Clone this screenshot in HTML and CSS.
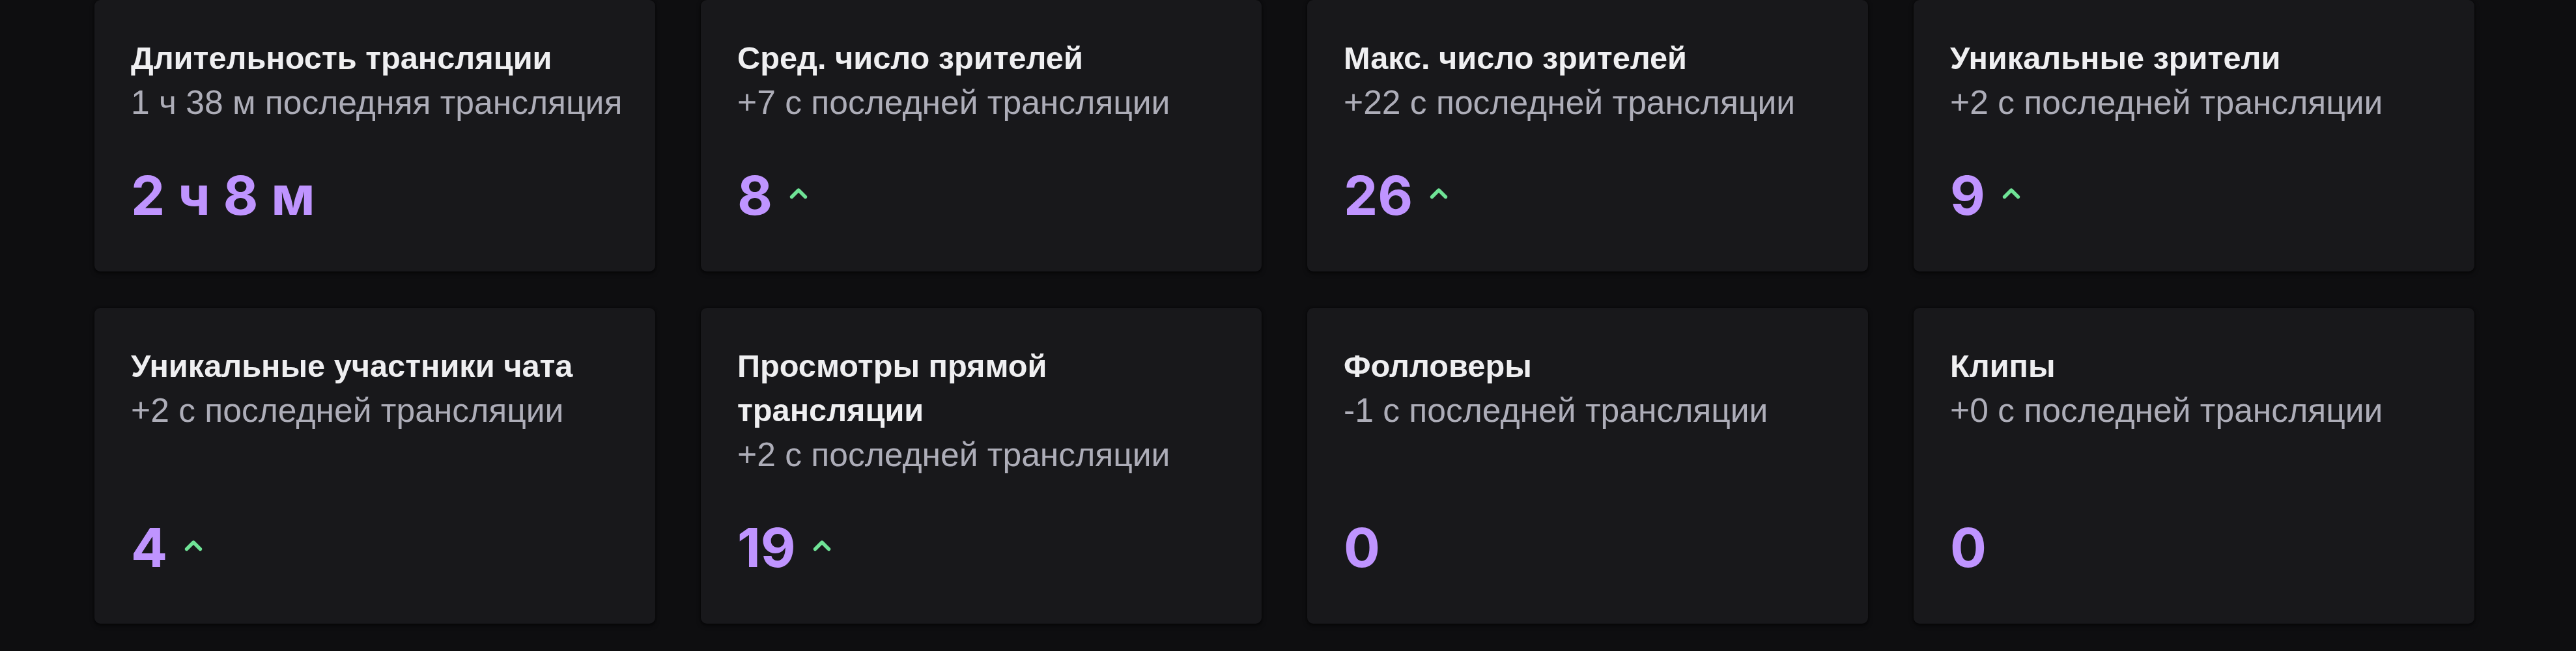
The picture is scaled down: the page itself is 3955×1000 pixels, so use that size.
FILE: index.html
```html
<!DOCTYPE html>
<html lang="ru">
<head>
<meta charset="utf-8">
<title>Статистика трансляции</title>
<link rel="stylesheet" href="styles.css">
</head>
<body>
<main class="stats">
  <section class="card">
    <h3 class="title">Длительность трансляции</h3>
    <p class="sub">1 ч 38 м последняя трансляция</p>
    <div class="value"><span class="num">2 ч 8 м</span></div>
  </section>
  <section class="card">
    <h3 class="title">Сред. число зрителей</h3>
    <p class="sub">+7 с последней трансляции</p>
    <div class="value"><span class="num">8</span><svg class="up" viewBox="0 0 20 14"><polyline points="3,11 10,4 17,11"/></svg></div>
  </section>
  <section class="card">
    <h3 class="title">Макс. число зрителей</h3>
    <p class="sub">+22 с последней трансляции</p>
    <div class="value"><span class="num">26</span><svg class="up" viewBox="0 0 20 14"><polyline points="3,11 10,4 17,11"/></svg></div>
  </section>
  <section class="card">
    <h3 class="title">Уникальные зрители</h3>
    <p class="sub">+2 с последней трансляции</p>
    <div class="value"><span class="num">9</span><svg class="up" viewBox="0 0 20 14"><polyline points="3,11 10,4 17,11"/></svg></div>
  </section>
  <section class="card">
    <h3 class="title">Уникальные участники чата</h3>
    <p class="sub">+2 с последней трансляции</p>
    <div class="value"><span class="num">4</span><svg class="up" viewBox="0 0 20 14"><polyline points="3,11 10,4 17,11"/></svg></div>
  </section>
  <section class="card">
    <h3 class="title">Просмотры прямой трансляции</h3>
    <p class="sub">+2 с последней трансляции</p>
    <div class="value"><span class="num">19</span><svg class="up" viewBox="0 0 20 14"><polyline points="3,11 10,4 17,11"/></svg></div>
  </section>
  <section class="card">
    <h3 class="title">Фолловеры</h3>
    <p class="sub">-1 с последней трансляции</p>
    <div class="value"><span class="num">0</span></div>
  </section>
  <section class="card">
    <h3 class="title">Клипы</h3>
    <p class="sub">+0 с последней трансляции</p>
    <div class="value"><span class="num">0</span></div>
  </section>
</main>
</body>
</html>
```
FILE: styles.css
```css
html, body {
  margin: 0;
  padding: 0;
  background: #0e0e10;
}

body {
  font-family: "Liberation Sans", Arial, sans-serif;
  color: #efeff1;
  height: 1000px;
  overflow: hidden;
}

.stats {
  display: grid;
  grid-template-columns: repeat(4, 1fr);
  column-gap: 70px;
  row-gap: 56px;
  padding: 0 156px 0 145px;
}

.card {
  display: flex;
  flex-direction: column;
  background: #18181b;
  border-radius: 9px;
  padding: 55px 30px 64px 56px;
  box-shadow: 0 3px 6px rgba(0, 0, 0, 0.55), 0 0 3px rgba(0, 0, 0, 0.5);
  min-width: 0;
}

.title {
  margin: 0;
  max-width: 760px;
  font-size: 48.7px;
  font-weight: 700;
  line-height: 68px;
  color: #efeff1;
}

.sub {
  margin: 0;
  font-size: 51.6px;
  font-weight: 400;
  line-height: 69px;
  color: #adadb8;
  white-space: nowrap;
}

.value {
  margin-top: auto;
  padding-top: 56px;
  display: flex;
  align-items: center;
  gap: 25px;
}

.num {
  font-family: Inter, "Liberation Sans", sans-serif;
  font-size: 83px;
  font-weight: 700;
  line-height: 105px;
  color: #bf94ff;
}

.up {
  width: 30px;
  height: 21px;
  margin-bottom: 8px;
  fill: none;
  stroke: #6fe396;
  stroke-width: 3.6;
  stroke-linecap: round;
  stroke-linejoin: round;
}
```
